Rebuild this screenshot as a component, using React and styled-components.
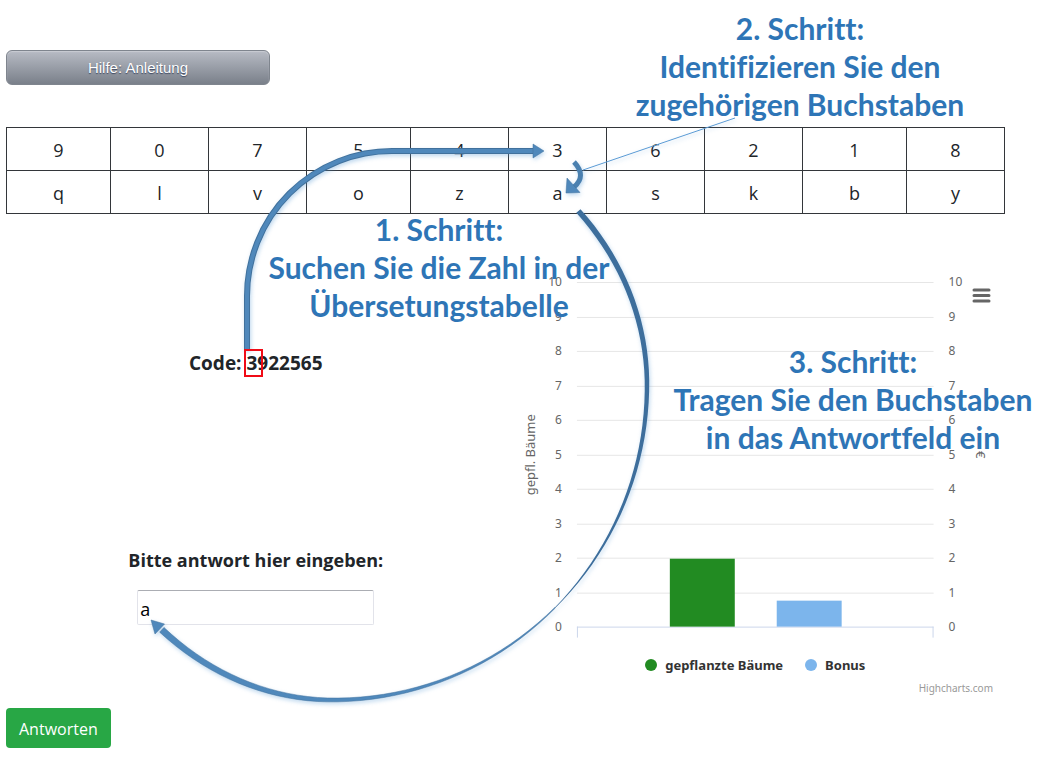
import React from "react";
import styled, { createGlobalStyle } from "styled-components";

const GlobalStyle = createGlobalStyle`
  * { box-sizing: border-box; }
  body {
    margin: 0;
    background: #fff;
    color: #212529;
    font-family: "Open Sans", "Noto Sans", sans-serif;
    font-size: 18px;
    line-height: 28px;
  }
`;

const Page = styled.div`
  position: relative;
  padding: 50px 51px 11px 6px;
`;

const HelpButton = styled.button`
  display: block;
  width: 264px;
  height: 35px;
  margin-bottom: 42px;
  border: 1px solid #7f858e;
  border-radius: 6px;
  background: linear-gradient(#b7bbc4, #7a808a);
  box-shadow: inset 0 1px 1px #c9ccd3;
  color: #fff;
  font: 15px "Liberation Sans", Arial, sans-serif;
  text-shadow: 0 1px 1px #3c4660;
`;

const CodeTable = styled.table`
  width: 100%;
  table-layout: fixed;
  border-collapse: collapse;
`;

const Col = styled.col`
  width: ${(p) => (p.$wide ? "10.4%" : "9.8%")};
`;

const Cell = styled.td`
  height: 43px;
  padding: 2px 0 0;
  border: 1px solid #33363a;
  text-align: center;
`;

const Main = styled.main`
  display: grid;
  grid-template-columns: 1fr 1fr;
`;

const AnswerForm = styled.form`
  display: flex;
  flex-direction: column;
  align-items: center;
  padding-top: 135px;
`;

const Code = styled.p`
  margin: 0 0 169px;
  font-size: 19px;
  font-weight: 700;
`;

const AnswerLabel = styled.label`
  margin-bottom: 16px;
  font-weight: 700;
`;

const AnswerInput = styled.input`
  width: 237px;
  height: 35px;
  padding: 3px 2px 0;
  border: 1px solid #e2e3ea;
  border-top-color: #abadb3;
  border-radius: 2px;
  color: #000;
  font: inherit;
`;

const SubmitButton = styled.button`
  display: block;
  height: 40px;
  margin-top: 9px;
  padding: 3px 13px 0;
  border: 0;
  border-radius: 4px;
  background: #28a745;
  color: #fff;
  font: 16px "Open Sans", "Noto Sans", sans-serif;
`;

const ChartPanel = styled.section`
  position: relative;
  padding-top: 50px;
  font-family: "Noto Sans", "Open Sans", sans-serif;
`;

const Plot = styled.svg`
  display: block;
  width: 100%;
`;

const MenuButton = styled.button`
  position: absolute;
  top: 70px;
  right: 12px;
  width: 24px;
  height: 22px;
  padding: 0;
  border: 0;
  background: none;
`;

const Legend = styled.div`
  display: flex;
  justify-content: center;
  gap: 22px;
  height: 24px;
  margin-top: 11px;
`;

const LegendItem = styled.button`
  display: flex;
  align-items: center;
  gap: 8px;
  padding: 0;
  border: 0;
  background: none;
  color: #333;
  font: 700 13px "Noto Sans", "Open Sans", sans-serif;

  &::before {
    content: "";
    width: 12px;
    height: 12px;
    border-radius: 50%;
    background: ${(p) => p.$color};
  }
`;

const Credits = styled.a`
  display: block;
  padding-right: 12px;
  color: #999;
  font-size: 10px;
  line-height: 22px;
  text-align: right;
  text-decoration: none;
`;

const Arrows = styled.svg`
  position: absolute;
  top: 0;
  left: 0;
  pointer-events: none;
  filter: drop-shadow(1px 2px 2px rgba(91, 155, 213, 0.4));
`;

const Marker = styled.svg`
  position: absolute;
  top: 348px;
  left: 243px;
  pointer-events: none;
`;

const Step = styled.p`
  position: absolute;
  top: ${(p) => p.$top}px;
  left: ${(p) => p.$left}px;
  width: 360px;
  margin: 0;
  color: #2e75b6;
  font: 700 30px/38px Lato, sans-serif;
  font-variant-ligatures: none;
  text-align: center;
  white-space: pre;
  pointer-events: none;
`;

const digits = ["9", "0", "7", "5", "4", "3", "6", "2", "1", "8"];
const letters = ["q", "l", "v", "o", "z", "a", "s", "k", "b", "y"];
const wideColumns = [0, 3, 8];

const steps = [
  { top: 210, left: 259, text: "1. Schritt:\nSuchen Sie die Zahl in der\nÜbersetungstabelle" },
  { top: 9, left: 620, text: "2. Schritt:\nIdentifizieren Sie den\nzugehörigen Buchstaben" },
  { top: 342, left: 673, text: "3. Schritt:\nTragen Sie den Buchstaben\nin das Antwortfeld ein" },
];

// Points of the third arrow's sweep: an ellipse around (333, 385) whose radii
// differ per quadrant. Angles run clockwise from the right-hand side.
function sweep(from, to, widthAt) {
  const count = 40;
  return Array.from({ length: count + 1 }, (_, i) => {
    const t = i / count;
    const angle = ((from + (to - from) * t) * Math.PI) / 180;
    const rx = Math.cos(angle) < 0 ? 272 : 314;
    const ry = Math.sin(angle) < 0 ? 279 : 315;
    return [333 + rx * Math.cos(angle), 385 + ry * Math.sin(angle), widthAt(t)];
  });
}

// Closed ribbon along [x, y, width] points.
function ribbon(points) {
  const side = (sign) =>
    points.map(([x, y, w], i) => {
      const a = points[i - 1] || points[i];
      const b = points[i + 1] || points[i];
      const dx = b[0] - a[0];
      const dy = b[1] - a[1];
      const half = (sign * w) / 2 / Math.hypot(dx, dy);
      return `${(x + dy * half).toFixed(2)} ${(y - dx * half).toFixed(2)}`;
    });
  return `M${side(1).join("L")}L${side(-1).reverse().join("L")}Z`;
}

const upperArc = ribbon(sweep(-38.6, 45, (t) => 0.6 + 4.9 * (1 - t ** 2)));
const lowerArc = ribbon(sweep(45, 129, (t) => 0.8 + 5.6 * t));

const ticks = Array.from({ length: 11 }, (_, i) => i);
const tickY = (n) => Math.round(364 - n * 34.5) - 0.5;

function Chart() {
  return (
    <ChartPanel aria-label="Gepflanzte Bäume und Bonus">
      <Plot viewBox="0 0 500 378" role="img" aria-label="Säulendiagramm">
        {ticks.map((n) => (
          <g key={n} fontSize="12" fill="#666">
            <path d={`M71 ${tickY(n)}H428`} stroke={n ? "#e6e6e6" : "#ccd6eb"} />
            <text x="56" y={tickY(n) + 4} textAnchor="end">{n}</text>
            <text x="443" y={tickY(n) + 4}>{n}</text>
          </g>
        ))}
        <path d="M71.5 363V374M427.5 363V374" stroke="#ccd6eb" />
        <rect x="164" y="295" width="65" height="68" fill="#228b22" />
        <rect x="271" y="337" width="65" height="26" fill="#7cb5ec" />
        <text fontSize="13" fill="#666" textAnchor="middle" transform="translate(29 191) rotate(-90)">
          gepfl. Bäume
        </text>
        <text fontSize="13" fill="#666" textAnchor="middle" transform="translate(470 191) rotate(90)">€</text>
      </Plot>
      <MenuButton type="button" aria-label="Diagrammmenü">
        <svg width="24" height="22" viewBox="0 0 24 22" stroke="#666" strokeWidth="3" strokeLinecap="round">
          <path d="M5 6H20M5 11.5H20M5 17H20" />
        </svg>
      </MenuButton>
      <Legend>
        <LegendItem type="button" $color="#228b22">gepflanzte Bäume</LegendItem>
        <LegendItem type="button" $color="#7cb5ec">Bonus</LegendItem>
      </Legend>
      <Credits href="#highcharts">Highcharts.com</Credits>
    </ChartPanel>
  );
}

export default function App() {
  return (
    <Page>
      <GlobalStyle />
      <HelpButton type="button">Hilfe: Anleitung</HelpButton>
      <CodeTable>
        <colgroup>
          {digits.map((d, i) => <Col key={d} $wide={wideColumns.includes(i)} />)}
        </colgroup>
        <tbody>
          <tr>{digits.map((d) => <Cell key={d}>{d}</Cell>)}</tr>
          <tr>{letters.map((l) => <Cell key={l}>{l}</Cell>)}</tr>
        </tbody>
      </CodeTable>
      <Main>
        <AnswerForm id="answer-form" onSubmit={(e) => e.preventDefault()}>
          <Code>Code: 3922565</Code>
          <AnswerLabel htmlFor="answer">Bitte antwort hier eingeben:</AnswerLabel>
          <AnswerInput id="answer" type="text" defaultValue="a" />
        </AnswerForm>
        <Chart />
      </Main>
      <SubmitButton type="submit" form="answer-form">Antworten</SubmitButton>

      <Arrows width="740" height="710" viewBox="0 0 740 710" aria-hidden="true">
        <path d="M247 350V296A145 145 0 0 1 392 151H534" fill="none" stroke="#41719c" strokeWidth="6" />
        <path d="M247 350V296A145 145 0 0 1 392 151H534" fill="none" stroke="#4f88bb" strokeWidth="4" />
        <path d="M533 144L544 151L533 158Z" fill="#4f88bb" stroke="#41719c" strokeWidth="0.5" />
        <path d="M583 170L735 118" stroke="#5b9bd5" />
        <path d="M574 162Q587 176 574 187" fill="none" stroke="#4a80b0" strokeWidth="5" />
        <path d="M567 178L580 192.500L566 193Z" fill="#4f88bb" stroke="#41719c" strokeWidth="0.5" />
        <path d={upperArc} fill="#3d6e9c" />
        <path d={lowerArc} fill="#4f88bb" stroke="#41719c" strokeWidth="0.5" />
        <path d="M151 620L164.500 624L155 634Z" fill="#4f88bb" stroke="#41719c" strokeWidth="0.5" />
      </Arrows>
      <Marker width="20" height="30" viewBox="0 0 20 30" aria-hidden="true">
        <rect x="2" y="2" width="17" height="26" fill="none" stroke="#f00b16" strokeWidth="2" />
      </Marker>
      {steps.map((s) => (
        <Step key={s.top} $top={s.top} $left={s.left}>{s.text}</Step>
      ))}
    </Page>
  );
}
